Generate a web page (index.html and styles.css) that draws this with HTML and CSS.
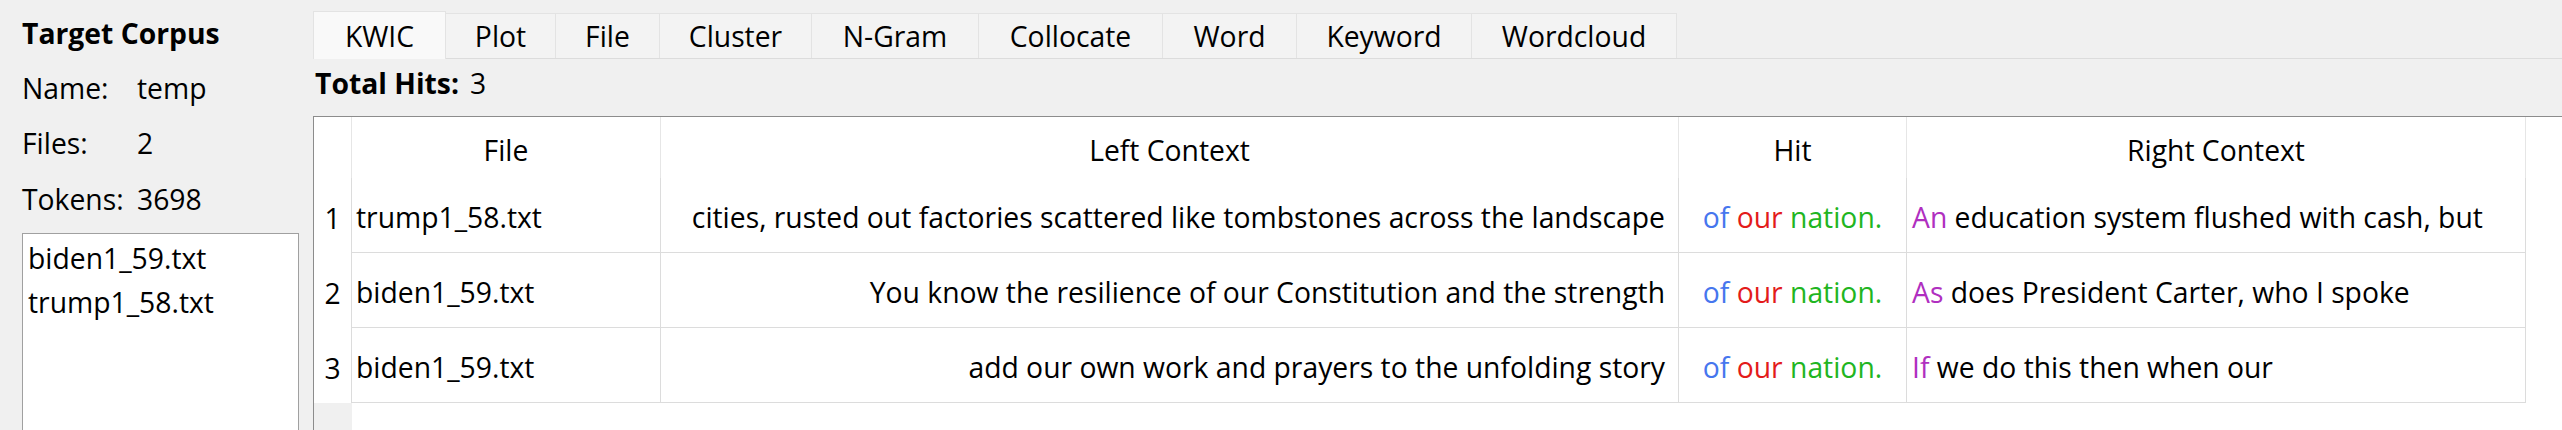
FILE: index.html
```html
<!DOCTYPE html>
<html lang="en">
<head>
<meta charset="utf-8">
<title>KWIC</title>
<link rel="stylesheet" href="styles.css">
</head>
<body>
<div class="app">
  <aside class="sidebar">
    <div class="title">Target Corpus</div>
    <div class="info">
      <span>Name:</span><span>temp</span>
      <span>Files:</span><span>2</span>
      <span>Tokens:</span><span>3698</span>
    </div>
    <div class="filelist">
      <div class="item">biden1_59.txt</div>
      <div class="item">trump1_58.txt</div>
    </div>
  </aside>
  <main class="main">
    <nav class="tabs">
      <div class="tab t-kwic active">KWIC</div>
      <div class="tab t-plot">Plot</div>
      <div class="tab t-file">File</div>
      <div class="tab t-cluster">Cluster</div>
      <div class="tab t-ngram">N-Gram</div>
      <div class="tab t-colloc">Collocate</div>
      <div class="tab t-word">Word</div>
      <div class="tab t-keyword">Keyword</div>
      <div class="tab t-cloud">Wordcloud</div>
    </nav>
    <div class="hits"><b class="hits-label">Total Hits:</b><span>3</span></div>
    <div class="frame">
      <div class="grid">
        <div class="hd corner"></div>
        <div class="hd">File</div>
        <div class="hd">Left Context</div>
        <div class="hd">Hit</div>
        <div class="hd">Right Context</div>

        <div class="vh">1</div>
        <div class="cell file">trump1_58.txt</div>
        <div class="cell left">cities, rusted out factories scattered like tombstones across the landscape</div>
        <div class="cell hit"><span class="c-of">of</span>&nbsp;<span class="c-our">our</span>&nbsp;<span class="c-nation">nation.</span></div>
        <div class="cell right"><span class="c-first">An</span>&nbsp;education system flushed with cash, but</div>

        <div class="vh">2</div>
        <div class="cell file">biden1_59.txt</div>
        <div class="cell left">You know the resilience of our Constitution and the strength</div>
        <div class="cell hit"><span class="c-of">of</span>&nbsp;<span class="c-our">our</span>&nbsp;<span class="c-nation">nation.</span></div>
        <div class="cell right"><span class="c-first">As</span>&nbsp;does President Carter, who I spoke</div>

        <div class="vh">3</div>
        <div class="cell file">biden1_59.txt</div>
        <div class="cell left">add our own work and prayers to the unfolding story</div>
        <div class="cell hit"><span class="c-of">of</span>&nbsp;<span class="c-our">our</span>&nbsp;<span class="c-nation">nation.</span></div>
        <div class="cell right"><span class="c-first">If</span>&nbsp;we do this then when our</div>
      </div>
      <div class="filler"><div class="filler-vh"></div></div>
    </div>
  </main>
</div>
</body>
</html>
```

FILE: styles.css
```css
html, body {
  margin: 0;
  padding: 0;
}
body {
  background: #f0f0f0;
  font-family: "Open Sans", "Noto Sans", sans-serif;
  font-size: 28.3px;
  color: #000;
}
.app {
  display: flex;
  height: 430px;
  overflow: hidden;
}
.sidebar {
  width: 313px;
  flex: none;
  padding-left: 22px;
  box-sizing: border-box;
}
.title {
  font-weight: 700;
  margin-top: 11px;
  line-height: 44px;
}
.info {
  display: grid;
  grid-template-columns: 115px auto;
  grid-auto-rows: 55.5px;
  align-items: center;
  margin-top: 5px;
}
.filelist {
  margin-top: 6.5px;
  width: 277px;
  height: 260px;
  box-sizing: border-box;
  background: #fff;
  border: 1px solid #a0a0a0;
  padding: 2px 5px;
}
.item {
  line-height: 44px;
  white-space: nowrap;
}
.main {
  flex: 1;
  min-width: 0;
  display: flex;
  flex-direction: column;
}
.tabs {
  display: flex;
  align-items: flex-end;
  height: 47px;
  margin-top: 11px;
  border-bottom: 1px solid #dcdcdc;
}
.tab {
  height: 45px;
  box-sizing: border-box;
  display: flex;
  align-items: center;
  justify-content: center;
  background: #f3f3f3;
  border-top: 1px solid #e3e3e3;
  border-right: 1px solid #e3e3e3;
  white-space: nowrap;
}
.tab.active {
  height: 48px;
  margin-bottom: -1px;
  padding-top: 1px;
  background: #f9f9f9;
  border-left: 1px solid #e3e3e3;
}
.t-kwic { width: 133px; }
.t-plot { width: 110px; }
.t-file { width: 104px; }
.t-cluster { width: 152px; }
.t-ngram { width: 167px; }
.t-colloc { width: 184px; }
.t-word { width: 134px; }
.t-keyword { width: 175px; }
.t-cloud { width: 205px; }
.hits {
  line-height: 48px;
  margin-bottom: 9px;
  padding-left: 2px;
}
.hits-label {
  margin-right: 11px;
}
.frame {
  flex: 1;
  display: flex;
  flex-direction: column;
  background: #fff;
  border-top: 1px solid #8c8c8c;
  border-left: 1px solid #8c8c8c;
}
.grid {
  display: grid;
  grid-template-columns: 38px 309px 1018px 228px 619px;
  grid-template-rows: 61px repeat(3, 75px);
}
.hd, .vh, .cell {
  display: flex;
  align-items: center;
  box-sizing: border-box;
  white-space: nowrap;
  overflow: hidden;
  padding-top: 4px;
}
.hd {
  justify-content: center;
  border-right: 1px solid #e6e6e6;
}
.vh {
  justify-content: center;
  border-right: 1px solid #dcdcdc;
}
.cell {
  border-right: 1px solid #dcdcdc;
  border-bottom: 1px solid #dcdcdc;
}
.file {
  padding-left: 4px;
}
.left {
  justify-content: flex-end;
  padding-right: 13px;
}
.hit {
  justify-content: center;
}
.right {
  padding-left: 5px;
}
.c-of { color: #4676ee; }
.c-our { color: #e31b1b; }
.c-nation { color: #21b521; }
.c-first { color: #b02fc0; }
.filler {
  flex: 1;
  display: flex;
}
.filler-vh {
  width: 38px;
  background: #f0f0f0;
}
```
